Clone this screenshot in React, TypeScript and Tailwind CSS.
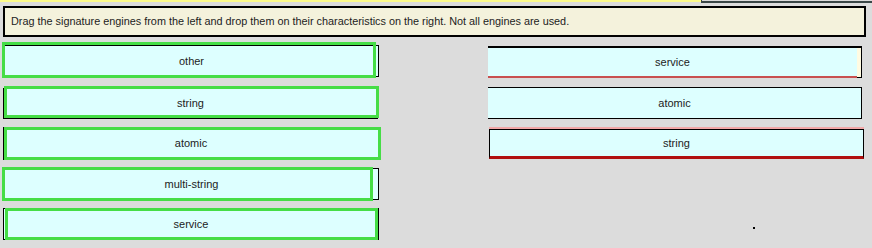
import React from "react";

const font = { fontFamily: '"Liberation Sans", Arial, sans-serif' };

export default function App() {
  return (
    <div
      className="relative w-[872px] h-[248px] overflow-hidden bg-[#dcdcdc] text-[11px] text-[#1c1c1c]"
      style={font}
    >
      {/* top strip */}
      <div className="flex h-[3px]">
        <div className="w-[701px] h-[2px] bg-[#fdfb8c]" />
        <div className="flex-1 border-l border-[#3a4646] border-b-2 border-b-[#3a4646] bg-[#dcdcdc]" />
      </div>

      {/* instructions */}
      <div className="ml-[3px] mt-[3px] w-[863px] h-[31px] border-2 border-black bg-[#f4f2dc] flex items-center pl-[6px] pb-[1px] text-[10.85px]">
        Drag the signature engines from the left and drop them on their characteristics on the right. Not all engines are used.
      </div>

      <div className="flex mt-[4px]">
        {/* left column */}
        <div className="w-[488px] flex flex-col">
          <div className="h-[41px]">
            <div className="relative ml-[4px] mt-[4px] w-[375px] h-[32px] border border-black bg-[#ddffff] flex items-center justify-center">
              <div className="absolute -left-[3px] -top-[4px] w-[374px] h-[36px] border-[3px] border-[#46dd46]" />
              <span className="relative">other</span>
            </div>
          </div>
          <div className="h-[41px]">
            <div className="relative ml-[3px] mt-[6px] w-[375px] h-[31px] border border-black bg-[#ddffff] flex items-center justify-center">
              <div className="absolute left-0 -top-[3px] w-[375px] h-[32px] border-[3px] border-[#46dd46]" />
              <span className="relative">string</span>
            </div>
          </div>
          <div className="h-[41px]">
            <div className="relative ml-[3px] mt-[4px] w-[376px] h-[33px] border border-black bg-[#ddffff] flex items-center justify-center">
              <div className="absolute left-0 -top-[1px] w-[377px] h-[33px] border-[3px] border-[#46dd46]" />
              <span className="relative">atomic</span>
            </div>
          </div>
          <div className="h-[41px]">
            <div className="relative ml-[4px] mt-[4px] w-[375px] h-[32px] border border-black bg-[#ddffff] flex items-center justify-center">
              <div className="absolute -left-[3px] -top-[2px] w-[371px] h-[34px] border-[3px] border-[#46dd46]" />
              <span className="relative">multi-string</span>
            </div>
          </div>
          <div className="h-[41px]">
            <div className="relative ml-[3px] mt-[3px] w-[376px] h-[32px] border border-black bg-[#ddffff] flex items-center justify-center">
              <div className="absolute left-[1px] -top-[1px] w-[373px] h-[32px] border-[3px] border-[#46dd46]" />
              <span className="relative">service</span>
            </div>
          </div>
        </div>

        {/* right column */}
        <div className="flex flex-col">
          <div className="mt-[5px] w-[374px] h-[32px] flex border-t-2 border-black bg-[#ddffff]">
            <div className="flex-1 flex items-center justify-center border-b-2 border-b-[#c85050]">service</div>
            <div className="w-[5px] bg-[#fffbe2] border-r border-black border-b border-b-black" />
          </div>
          <div className="mt-[9px] w-[374px] h-[32px] border-t border-b border-r border-black bg-[#ddffff] flex items-center justify-center">
            atomic
          </div>
          <div className="mt-[8px] ml-[1px] w-[375px] h-[32px] border-t-2 border-t-[#f2a8a8] bg-[#ddffff]">
            <div className="h-full border-t border-x border-black border-b-[3px] border-b-[#b01010] flex items-center justify-center">
              string
            </div>
          </div>
        </div>
      </div>

      <div className="absolute left-[753px] top-[227px] w-[2px] h-[2px] bg-black" />
    </div>
  );
}
